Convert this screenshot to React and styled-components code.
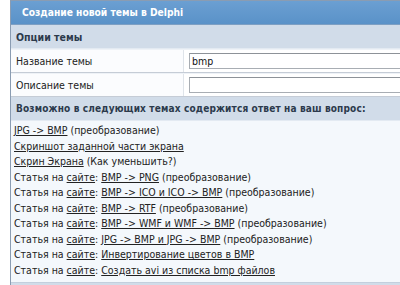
import React from "react"
import styled, { createGlobalStyle } from "styled-components"

const GlobalStyle = createGlobalStyle`
    html, body {
        margin: 0;
        padding: 0;
        background: #ffffff;
        overflow: hidden;
    }
    body {
        font-family: "DejaVu Sans Condensed", "DejaVu Sans", sans-serif;
    }
`

const links = [
    { site: false, parts: [["JPG -> BMP", true], [" (преобразование)", false]] },
    { site: false, parts: [["Скриншот заданной части экрана", true]] },
    { site: false, parts: [["Скрин Экрана", true], [" (Как уменьшить?)", false]] },
    { site: true, parts: [["BMP -> PNG", true], [" (преобразование)", false]] },
    { site: true, parts: [["BMP -> ICO и ICO -> BMP", true], [" (преобразование)", false]] },
    { site: true, parts: [["BMP -> RTF", true], [" (преобразование)", false]] },
    { site: true, parts: [["BMP -> WMF и WMF -> BMP", true], [" (преобразование)", false]] },
    { site: true, parts: [["JPG -> BMP и JPG -> BMP", true], [" (преобразование)", false]] },
    { site: true, parts: [["Инвертирование цветов в BMP", true]] },
    { site: true, parts: [["Создать avi из списка bmp файлов", true]] },
]

function App() {
    return (
        <Page>
            <GlobalStyle />
            <Panel>
                <TitleBar>Создание новой темы в Delphi</TitleBar>
                <SubHeader>Опции темы</SubHeader>
                <FieldRow>
                    <Label>Название темы</Label>
                    <InputCell>
                        <TextInput defaultValue="bmp" />
                    </InputCell>
                </FieldRow>
                <FieldRow>
                    <Label>Описание темы</Label>
                    <InputCell>
                        <TextInput defaultValue="" />
                    </InputCell>
                </FieldRow>
                <SubHeader $small>Возможно в следующих темах содержится ответ на ваш вопрос:</SubHeader>
                <LinkList>
                    {links.map((item, i) => (
                        <LinkLine key={i}>
                            {item.site && (
                                <>
                                    Статья на <Link href="#">сайте</Link>:{" "}
                                </>
                            )}
                            {item.parts.map(([text, isLink], j) =>
                                isLink ? <Link key={j} href="#">{text}</Link> : <span key={j}>{text}</span>
                            )}
                        </LinkLine>
                    ))}
                </LinkList>
                <FooterBar />
            </Panel>
        </Page>
    )
}

export default App

const Page = styled.div`
    width: 400px;
    height: 285px;
    padding-left: 10px;
    box-sizing: border-box;
`

const Panel = styled.div`
    width: 420px;
    border-left: 1px solid #8a9cb2;
    border-top: 1px solid #8a9cb2;
    background: #f4f8fc;
`

const TitleBar = styled.div`
    height: 23px;
    display: flex;
    align-items: center;
    padding-left: 11px;
    background: linear-gradient(#6b9fd2, #5a92c8);
    color: #ffffff;
    font-weight: bold;
    font-size: 10.2px;
    border-bottom: 1px solid #7d9fc3;
`

const SubHeader = styled.div`
    height: 23px;
    display: flex;
    align-items: center;
    padding-left: 5px;
    background: #d1dce9;
    color: #2c3a4c;
    font-weight: bold;
    font-size: ${p => (p.$small ? "10px" : "10.5px")};
    letter-spacing: ${p => (p.$small ? "0.15px" : "0")};
    border-bottom: 1px solid #e3eaf2;
`

const FieldRow = styled.div`
    display: flex;
    height: 22px;
    border-bottom: 1px solid #c5ccd6;
    border-top: 1px solid #eef2f7;
    background: #fbfcfe;
`

const Label = styled.div`
    flex: 0 0 167px;
    padding-left: 5px;
    display: flex;
    align-items: center;
    font-size: 10.5px;
    color: #222222;
    border-right: 1px solid #dfe4ea;
`

const InputCell = styled.div`
    flex: 1;
    min-width: 0;
    display: flex;
    align-items: center;
    padding-left: 5px;
    background: #ffffff;
`

const TextInput = styled.input`
    flex: 1;
    min-width: 0;
    height: 16px;
    box-sizing: border-box;
    border: 1px solid #a8adb3;
    border-top-color: #8d9298;
    padding: 0 2px;
    font-family: "DejaVu Sans Condensed", "DejaVu Sans", sans-serif;
    font-size: 10.5px;
    color: #111111;
    background: #ffffff;
    outline: none;
`

const LinkList = styled.div`
    padding: 2px 0 4px 3px;
    font-size: 10.5px;
    color: #222222;
    background: #f4f8fc;
`

const LinkLine = styled.div`
    height: 15.5px;
    line-height: 15.5px;
    white-space: nowrap;
`

const Link = styled.a`
    color: #222222;
    text-decoration: underline;
    text-underline-offset: 1px;
`

const FooterBar = styled.div`
    height: 10px;
    background: #d1dce9;
    border-top: 1px solid #c3cfdd;
`
